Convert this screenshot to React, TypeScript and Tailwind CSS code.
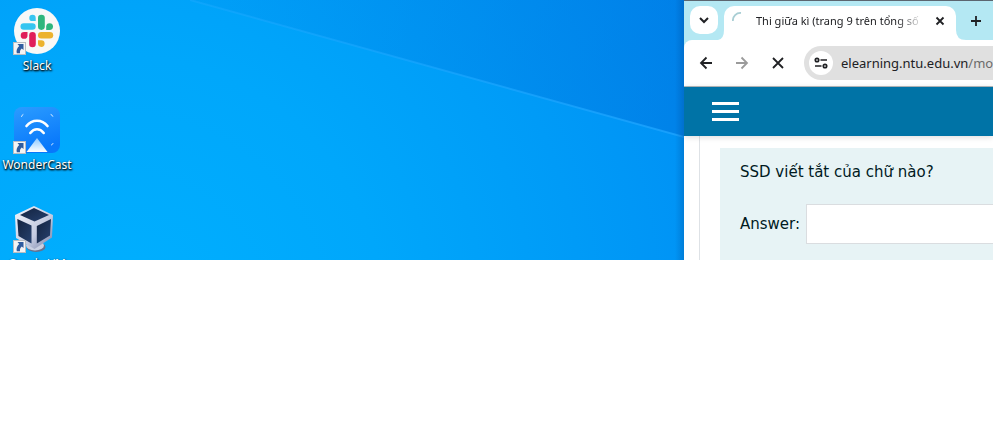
import type { ReactNode } from "react";

function ShortcutBadge() {
  return (
    <svg className="absolute bottom-0 -left-px h-[13px] w-[13px]" viewBox="0 0 13 13" aria-hidden="true">
      <rect x="0.5" y="0.5" width="12" height="12" fill="#f4f4f4" stroke="#b9bdc2" />
      <path d="M4.500 2h6v6L8.800 6.400C7.200 7.500 6.800 8.800 7 11.300H3.800C3 8.300 4.200 5.800 6.200 4z" fill="#2f5c9f" />
    </svg>
  );
}

function SlackIcon() {
  return (
    <svg className="h-[46px] w-[46px]" viewBox="0 0 46 46" aria-hidden="true">
      <circle cx="23" cy="23" r="23" fill="#f8f8f7" />
      <g fill="#36c5f0">
        <path d="M18.500 6.700a3.200 3.200 0 0 1 3.200 3.200v3.200h-3.200a3.200 3.200 0 0 1 0-6.400z" />
        <rect x="6.500" y="15.200" width="15.200" height="6.600" rx="3.300" />
      </g>
      <g fill="#2eb67d">
        <rect x="24" y="6.700" width="6.800" height="15.200" rx="3.300" />
        <path d="M32.200 22v-3.400a3.400 3.400 0 1 1 3.400 3.400z" />
      </g>
      <g fill="#ecb22e">
        <rect x="24" y="24" width="15.200" height="6.600" rx="3.300" />
        <path d="M24 32.300h3.200a3.300 3.300 0 1 1-3.200 3.300z" />
      </g>
      <g fill="#e01e5a">
        <rect x="15.200" y="24" width="6.600" height="15.200" rx="3.300" />
        <path d="M13.500 24v3.400A3.400 3.400 0 1 1 10.100 24z" />
      </g>
    </svg>
  );
}

function WonderCastIcon() {
  return (
    <svg className="h-[46px] w-[46px]" viewBox="0 0 46 46" aria-hidden="true">
      <defs>
        <linearGradient id="cast-bg" x1="0" y1="0" x2="0.3" y2="1">
          <stop offset="0" stopColor="#2b9cff" />
          <stop offset="1" stopColor="#0878fb" />
        </linearGradient>
        <linearGradient id="cast-beam" x1="0" y1="0" x2="0" y2="1">
          <stop offset="0" stopColor="#8cc8ff" />
          <stop offset="1" stopColor="#fff" />
        </linearGradient>
      </defs>
      <rect width="46" height="46" rx="8" fill="url(#cast-bg)" />
      <path d="M23 31 33.500 45H12.500z" fill="url(#cast-beam)" />
      <g fill="none" stroke="#fff" strokeLinecap="round">
        <path d="M12.500 19C18 12 28 12 33.500 19M16.300 26c3.800-5 9.600-5 13.400 0" strokeWidth="2.600" />
        <path d="M7.500 9.500q.3-1.500 1.500-2M37 7.500q1.300.3 1.800 1.800M37.500 38q1-.3 1.500-1.500" strokeWidth="1" opacity=".8" />
      </g>
    </svg>
  );
}

function VirtualBoxIcon() {
  return (
    <svg className="h-[47px] w-[46px]" viewBox="0 0 46 47" aria-hidden="true">
      <defs>
        <linearGradient id="box-frame" x1="0" y1="0" x2="1" y2="1">
          <stop offset="0" stopColor="#f4f6fc" />
          <stop offset="0.600" stopColor="#c3cae0" />
          <stop offset="1" stopColor="#727da3" />
        </linearGradient>
        <linearGradient id="box-face" x1="0" y1="0" x2="1" y2="1">
          <stop offset="0" stopColor="#14233f" />
          <stop offset="1" stopColor="#26416f" />
        </linearGradient>
      </defs>
      <ellipse cx="22" cy="41" rx="9.500" ry="5" fill="#66728f" />
      <ellipse cx="21" cy="39.500" rx="9" ry="5" fill="#c9d0e2" />
      <path d="M20 0 39 9 38 31.500 20.500 43 2 32 1 9z" fill="url(#box-frame)" />
      <g fill="url(#box-face)">
        <path d="M20 2 35 9 20.500 15.500 6 9z" />
        <path d="M3.300 13 17.500 19.500v18L4.500 30z" />
        <path d="M22.800 20 37 13 36 29.500 22.800 37.500z" />
      </g>
    </svg>
  );
}

function Shortcut({ label, children }: { label: string; children: ReactNode }) {
  return (
    <li className="flex h-[99px] flex-col items-center">
      <span className="relative flex h-[47px] w-[46px]">
        {children}
        <ShortcutBadge />
      </span>
      <span className="mt-[3px] text-xs leading-4 whitespace-nowrap text-white [text-shadow:1px_1px_2px_#000,0_1px_2px_#000]">
        {label}
      </span>
    </li>
  );
}

function Wallpaper() {
  return (
    <svg className="absolute inset-0 h-full w-full" viewBox="0 0 684 260" preserveAspectRatio="none" aria-hidden="true">
      <defs>
        <radialGradient id="sky" gradientUnits="userSpaceOnUse" cx="120" cy="320" r="660">
          <stop offset="0" stopColor="#00b0ff" />
          <stop offset="0.400" stopColor="#00a7fb" />
          <stop offset="0.700" stopColor="#009bf7" />
          <stop offset="1" stopColor="#008ef4" />
        </radialGradient>
        <linearGradient id="shade" gradientUnits="userSpaceOnUse" x1="190" y1="0" x2="684" y2="0">
          <stop offset="0" stopColor="#0072dd" stopOpacity=".08" />
          <stop offset="1" stopColor="#006cd8" stopOpacity=".42" />
        </linearGradient>
        <linearGradient id="ray" x1="0" x2="1">
          <stop offset="0" stopColor="#1ba9ff" stopOpacity=".6" />
          <stop offset="1" stopColor="#1ea4ff" />
        </linearGradient>
        <linearGradient id="window-shadow" x1="0" x2="1">
          <stop offset="0" stopColor="#003a80" stopOpacity="0" />
          <stop offset="1" stopColor="#003a80" stopOpacity=".25" />
        </linearGradient>
      </defs>
      <path d="M0 0h684v260H0z" fill="url(#sky)" />
      <path d="M190 0h494v137z" fill="url(#shade)" />
      <path d="m190-1 494 137v2L190 1z" fill="url(#ray)" opacity=".8" />
      <path d="M675 0h9v260h-9z" fill="url(#window-shadow)" />
    </svg>
  );
}

function TabStrip() {
  return (
    <div className="flex h-[39px] bg-[#b4e8f3] pt-[5px] pl-[6px]">
      <button aria-label="Search tabs" className="flex h-7 w-7 shrink-0 items-center justify-center rounded-[10px] bg-white text-[#202124]">
        <svg width="10" height="8" viewBox="0 0 10 8" fill="none" stroke="currentColor" strokeWidth="2" aria-hidden="true">
          <path d="m1 2 4 4 4-4" />
        </svg>
      </button>
      <svg className="mt-auto h-2.5 w-[6px] shrink-0" viewBox="0 0 6 10" preserveAspectRatio="none" aria-hidden="true">
        <path d="M6 0v10H0q6-1 6-10" fill="#fff" />
      </svg>
      <div className="flex w-[232px] shrink-0 items-start rounded-t-[10px] bg-white pt-[6px] pl-2 text-[#202124]">
        <svg className="h-4 w-4 shrink-0" viewBox="0 0 16 16" fill="none" aria-hidden="true">
          <path d="M.9 9A7.500 7.500 0 0 1 9 1" stroke="#a9ced4" strokeWidth="1.800" />
        </svg>
        <span className="ml-2 w-[168px] shrink-0 overflow-hidden text-[11px] leading-[18px] whitespace-nowrap [mask-image:linear-gradient(to_right,#000_140px,transparent_168px)]">
          Thi giữa kì (trang 9 trên tổng số
        </span>
        <button aria-label="Close tab" className="ml-[6px] flex h-[18px] w-5 shrink-0 items-center justify-center">
          <svg width="10" height="10" viewBox="0 0 10 10" stroke="currentColor" strokeWidth="1.800" aria-hidden="true">
            <path d="m1.500 1.500 7 7m0-7-7 7" />
          </svg>
        </button>
      </div>
      <svg className="mt-auto h-2.5 w-2.5 shrink-0" viewBox="0 0 10 10" aria-hidden="true">
        <path d="M0 0v10h10Q0 10 0 0" fill="#fff" />
      </svg>
      <button aria-label="New tab" className="flex h-[30px] w-5 shrink-0 items-center justify-center text-[#202124]">
        <svg width="12" height="12" viewBox="0 0 12 12" stroke="currentColor" strokeWidth="1.800" aria-hidden="true">
          <path d="M1 6h10M6 1v10" />
        </svg>
      </button>
    </div>
  );
}

function Toolbar() {
  return (
    <div className="bg-[#b4e8f3]">
      <div className="flex h-[47px] items-center rounded-tl-lg border-b border-[#b5babd] bg-white pl-[10px] text-[#202124]">
        <button aria-label="Back" className="flex h-6 w-6 items-center justify-center">
          <svg width="14" height="14" viewBox="0 0 14 14" fill="none" stroke="currentColor" strokeWidth="1.800" aria-hidden="true">
            <path d="M13 7H2m5.500-5.500L2 7l5.500 5.500" />
          </svg>
        </button>
        <button aria-label="Forward" disabled className="ml-3 flex h-6 w-6 items-center justify-center text-[#9b9b9b]">
          <svg width="14" height="14" viewBox="0 0 14 14" fill="none" stroke="currentColor" strokeWidth="1.800" aria-hidden="true">
            <path d="M1 7h11M6.500 1.500 12 7l-5.500 5.500" />
          </svg>
        </button>
        <button aria-label="Stop loading" className="ml-3 flex h-6 w-6 items-center justify-center">
          <svg width="12" height="12" viewBox="0 0 12 12" stroke="currentColor" strokeWidth="1.800" aria-hidden="true">
            <path d="m1 1 10 10m0-10L1 11" />
          </svg>
        </button>
        <div className="ml-[14px] flex h-[34px] min-w-0 flex-1 items-center overflow-hidden rounded-l-full bg-[#e0e0e0] pl-[5px]">
          <button aria-label="View site information" className="flex h-6 w-6 shrink-0 items-center justify-center rounded-full bg-white">
            <svg width="14" height="12" viewBox="0 0 14 12" fill="none" stroke="currentColor" strokeWidth="1.700" aria-hidden="true">
              <circle cx="3" cy="3" r="1.700" />
              <path d="M6.500 3H13M1 9h6.500" />
              <circle cx="11" cy="9" r="1.700" />
            </svg>
          </button>
          <span className="ml-2 text-[13px] leading-5 whitespace-nowrap">
            elearning.ntu.edu.vn<span className="text-[#6b6b6b]">/mod</span>
          </span>
        </div>
      </div>
    </div>
  );
}

function BrowserWindow() {
  return (
    <section className="flex min-w-0 flex-col overflow-hidden border-t border-[#5c6670] bg-white">
      <TabStrip />
      <Toolbar />
      <header className="z-10 flex h-[49px] shrink-0 items-center bg-[#0073a6] pl-7 shadow-[0_1px_6px_rgba(0,0,0,0.15)]">
        <button aria-label="Open menu" className="flex w-[27px] flex-col gap-[5px]">
          <span className="h-[3px] w-full bg-white" />
          <span className="h-[3px] w-full bg-white" />
          <span className="h-[3px] w-full bg-white" />
        </button>
      </header>
      <main className="ml-[15px] flex-1 border-l border-[#dee2e6] pt-3 pl-5 font-['DejaVu_Sans',sans-serif] text-[15px] text-[#001a1e]">
        <div className="h-full bg-[#e7f3f5] pt-3 pl-5">
          <p className="leading-6 whitespace-nowrap">SSD viết tắt của chữ nào?</p>
          <div className="mt-5 flex items-center gap-[6px]">
            <label htmlFor="answer">Answer:</label>
            <input id="answer" type="text" className="h-10 min-w-0 flex-1 border border-r-0 border-[#dadde0] bg-white px-3" />
          </div>
        </div>
      </main>
    </section>
  );
}

export default function App() {
  return (
    <div className="min-h-screen bg-white font-['Noto_Sans',sans-serif]">
      <div className="grid h-[260px] grid-cols-[684px_1fr] overflow-hidden">
        <div className="relative overflow-hidden">
          <Wallpaper />
          <ul className="relative w-[74px] pt-2">
            <Shortcut label="Slack"><SlackIcon /></Shortcut>
            <Shortcut label="WonderCast"><WonderCastIcon /></Shortcut>
            <Shortcut label="Oracle VM"><VirtualBoxIcon /></Shortcut>
          </ul>
        </div>
        <BrowserWindow />
      </div>
    </div>
  );
}
